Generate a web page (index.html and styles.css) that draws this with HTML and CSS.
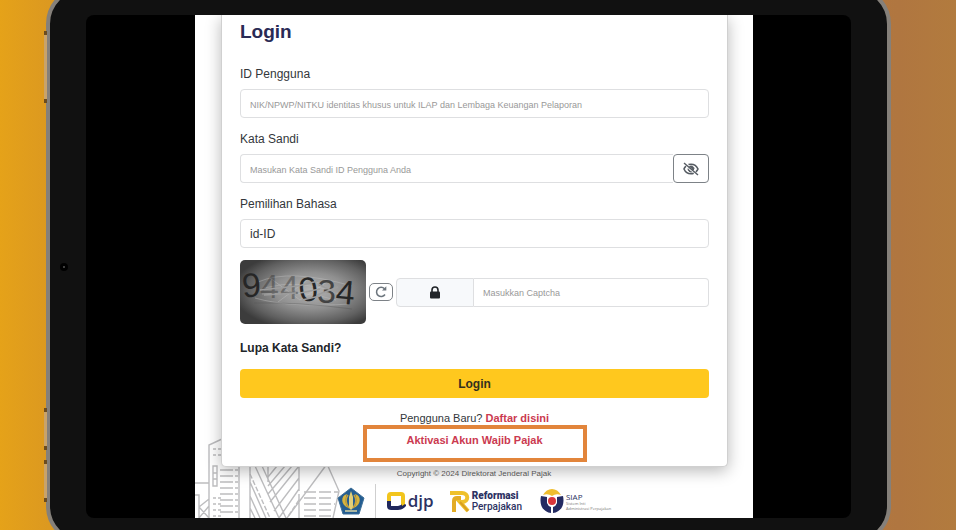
FILE: index.html
```
<!DOCTYPE html>
<html lang="id">
  <head>
    <meta charset="UTF-8" />
    <meta name="viewport" content="width=device-width, initial-scale=1.0" />
    <title>Login - DJP</title>
    <link rel="stylesheet" href="styles.css">
  </head>
  <body>
    <div class="tablet">
      <span class="side-button power"></span>
      <span class="side-button volume-up"></span>
      <span class="side-button volume-down"></span>
      <span class="camera"></span>

      <div class="screen">
        <main class="page">
          <!-- City skyline behind the card -->
          <svg class="skyline" viewBox="0 0 150 82" fill="none" stroke="#bdbdbf" stroke-width="1.4">
            <path d="M14 82V9L27 3M0 47H14M44 30V82M0 59H4V82M4 71L14 63M4 71L14 82M4 82L14 70" />
            <path d="M18 13H26M18 19H26M18 62H26M18 68H26M18 74H26M18 80H26" stroke-dasharray="3 2" />
            <path d="M18 30H22V50H18ZM18 37H22M18 43H22" />
            <path d="M25 34H43M25 40H43M25 46H43M25 52H43M25 58H43M25 64H43M25 70H43M25 76H43" stroke-dasharray="13 2" />
            <path d="M55 30V82M60 30L84 82M67 30L91 82M73 30V46M104 30V55M104 30L75 66M97 30L73 58M90 30L73 50M82 30L73 41M104 42L79 75M104 53L84 82M55 46L71 82M55 60L65 82M55 72L60 82M92 82L132 28L144 55L138 82M104 58V82" />
            <path d="M55 38L75 82M104 64L92 82" stroke-dasharray="5 2" />
            <path d="M109 56H143M109 62H138M109 68H140M109 74H138M109 80H136" stroke-dasharray="12 3" />
          </svg>

          <form class="card">
            <h1>Login</h1>

            <div class="field">
              <label for="user">ID Pengguna</label>
              <input id="user" class="control" type="text" placeholder="NIK/NPWP/NITKU identitas khusus untuk ILAP dan Lembaga Keuangan Pelaporan" />
            </div>

            <div class="field">
              <label for="password">Kata Sandi</label>
              <div class="input-group">
                <input id="password" class="control joined-right" type="password" placeholder="Masukan Kata Sandi ID Pengguna Anda" />
                <button type="button" class="toggle" aria-label="Tampilkan kata sandi">
                  <svg width="16" height="14" viewBox="0 0 16 14" fill="none" stroke="#555b62">
                    <path d="M3 4.200C2 5 1.300 6 1 7c1.300 3 4 4.800 7 4.800 1 0 1.900-.2 2.700-.5M5.500 2.600C6.300 2.300 7.100 2.200 8 2.200c3 0 5.700 1.800 7 4.800-.5 1.100-1.200 2-2.100 2.800" stroke-width="1.600" />
                    <path d="M6.500 4.500C8.500 3.300 11 4.500 11 7L9.800 8.300C9.700 6.500 8.300 6 6.500 4.500ZM5 6.600C5 9 6.500 10.200 8.800 10" fill="#555b62" />
                    <path d="M1 1L15 13" stroke-width="1.400" />
                  </svg>
                </button>
              </div>
            </div>

            <div class="field">
              <label for="language">Pemilihan Bahasa</label>
              <select id="language" class="control">
                <option>id-ID</option>
              </select>
            </div>

            <div class="captcha">
              <svg class="captcha-image" viewBox="0 0 126 64" role="img" aria-label="Captcha">
                <defs>
                  <radialGradient id="glow" cx="0.56" cy="0.48" r="0.62">
                    <stop offset="0" stop-color="#b4b4b4" />
                    <stop offset="0.45" stop-color="#909090" />
                    <stop offset="0.8" stop-color="#606060" />
                    <stop offset="1" stop-color="#3c3c3c" />
                  </radialGradient>
                </defs>
                <rect width="126" height="64" fill="url(#glow)" />
                <g fill="none" stroke="#c4c4c4" stroke-opacity="0.4">
                  <path d="M18 22Q50 8 112 26M15 38Q50 48 110 44M24 28Q60 18 100 34M22 34Q64 30 96 40M30 18L60 40L90 20M38 42L70 18L104 38" />
                </g>
                <path d="M14 43Q60 42 112 49" fill="none" stroke="#555" stroke-opacity="0.4" />
                <g class="digits">
                  <text x="2" y="37" transform="rotate(-4 11 26)">9</text>
                  <text class="faint" x="20" y="38">4</text>
                  <text class="faint" x="40" y="39">4</text>
                  <text x="59" y="41" transform="rotate(-8 68 30)">0</text>
                  <text class="worn" x="77" y="43">3</text>
                  <text x="96" y="44" transform="rotate(5 105 33)">4</text>
                </g>
                <path d="M58 26L78 21M60 33L80 29M62 40L80 36M78 24L97 33M77 35L98 27M20 30L58 26M24 35L56 33" fill="none" stroke="#9c9c9c" stroke-width="1.500" />
              </svg>
              <button type="button" class="refresh" aria-label="Muat ulang captcha">
                <svg width="14" height="14" viewBox="0 0 14 14" fill="none" stroke="#6c757d" stroke-width="1.500">
                  <path d="M11 9.500A4.600 4.600 0 1 1 10.500 3.800" />
                  <path d="M12.300 1.200V5.600H8Z" fill="#6c757d" stroke="none" />
                </svg>
              </button>
              <div class="input-group">
                <label class="addon" for="captcha" aria-label="Captcha">
                  <svg width="12" height="13" viewBox="0 0 12 13">
                    <path d="M3 6V4a3 3 0 0 1 6 0v2" fill="none" stroke="#212529" stroke-width="1.600" />
                    <rect x="1" y="5.500" width="10" height="7" rx="1" fill="#212529" />
                  </svg>
                </label>
                <input id="captcha" class="control joined-left" type="text" placeholder="Masukkan Captcha" />
              </div>
            </div>

            <a class="forgot" href="#">Lupa Kata Sandi?</a>
            <button type="submit" class="submit">Login</button>

            <p class="register">Pengguna Baru? <a href="#">Daftar disini</a></p>
            <a class="activation" href="#">Aktivasi Akun Wajib Pajak</a>
          </form>

          <footer>
            <p class="copyright">Copyright © 2024 Direktorat Jenderal Pajak</p>
            <div class="logos">
              <svg width="28" height="28" viewBox="0 0 28 28">
                <path d="M14 1L27 11L22 27H6L1 11Z" fill="#245d91" stroke="#3d6f98" />
                <path d="M14 4L12 10V21L14 23L16 21V10Z" fill="#e2cf79" />
                <path d="M10 7C3 9 4 18 11 21C8 16 8 12 10 7ZM18 7C25 9 24 18 17 21C20 16 20 12 18 7Z" fill="#d8b43c" />
                <path d="M11 8C8 12 9 17 12 21M17 8C20 12 19 17 16 21" fill="none" stroke="#c7a13b" stroke-width="1.500" />
                <path d="M8 24H20" stroke="#d9d6a8" stroke-width="1.500" />
              </svg>
              <span class="divider"></span>
              <div class="logo djp">
                <svg width="20" height="20" viewBox="0 0 20 20" fill="none" stroke-width="4">
                  <path d="M3 11V5Q3 3 5 3H15Q17 3 17 5V14" stroke="#f2c51d" />
                  <path d="M3 10V15Q3 17 5 17H12Q16 17 19 13" stroke="#20285c" />
                  <path d="M15 8H19V13L16 15Z" fill="#f2c51d" />
                </svg>
                <span>djp</span>
              </div>
              <div class="logo reform">
                <svg width="21" height="23" viewBox="0 0 21 23" fill="none" stroke-width="4">
                  <path d="M1 3H13C20 3 20 12 13 12H11L19 21" stroke="#efc12b" />
                  <path d="M5 22V11Q5 8 8 8H12" stroke="#e3ac25" />
                  <path d="M11 12L19 21" stroke="#d99f20" stroke-width="2" />
                </svg>
                <div class="reform-name">
                  <strong>Reformasi</strong>
                  <span>Perpajakan</span>
                </div>
              </div>
              <div class="logo siap">
                <svg width="24" height="26" viewBox="0 0 24 26">
                  <path d="M3 7C7-1 17-1 21 7Q16 5 12 8Q8 5 3 7Z" fill="#efbd2e" />
                  <path d="M1 8L7 9V15Q8 18 11 19V25C3 24-1 17 1 8ZM23 8L17 9V15Q16 18 13 19V25C21 24 25 17 23 8Z" fill="#242b62" />
                  <circle cx="12" cy="13" r="4" fill="#d9363b" />
                </svg>
                <div>
                  <span class="siap-name">SIAP</span>
                  <span class="siap-sub">Sistem Inti<br>Administrasi Perpajakan</span>
                </div>
              </div>
            </div>
          </footer>
        </main>
      </div>
    </div>
  </body>
</html>
```
FILE: styles.css
```
* {
  box-sizing: border-box;
}

body {
  margin: 0;
  height: 100vh;
  display: flex;
  overflow: hidden;
  font-family: "Liberation Sans", Arial, sans-serif;
  font-size: 12px;
  color: #33373b;
  background: linear-gradient(90deg, #e5a219 0%, #dc9920 5%, #b07640 94%, #b27b3e 100%);
}

h1,
p {
  margin: 0;
}

a {
  text-decoration: none;
}

svg {
  display: block;
  flex: none;
}

/* Tablet frame */
.tablet {
  position: relative;
  flex: 1;
  display: flex;
  margin: -14px 65px -14px 46px;
  padding: 25px 36px 22px;
  border: 4px solid #85807a;
  border-radius: 38px;
  background: #111;
}

.side-button {
  position: absolute;
  left: -6px;
  width: 3px;
  border: solid #6b4c20;
  border-width: 4px 0;
  background: #c9a36a;
}

.power {
  top: 41px;
  height: 72px;
}

.volume-up {
  top: 418px;
  height: 42px;
}

.volume-down {
  top: 470px;
  height: 42px;
}

.camera {
  position: absolute;
  left: 10px;
  top: 273px;
  width: 8px;
  height: 8px;
  border: 3px solid #000;
  border-radius: 50%;
  background: #555;
}

.screen {
  flex: 1;
  display: flex;
  padding: 0 98px 0 109px;
  border-radius: 8px;
  background: #000;
}

.page {
  position: relative;
  flex: 1;
  display: flex;
  flex-direction: column;
  overflow: hidden;
  background: #fff;
}

.skyline {
  position: absolute;
  left: 0;
  bottom: 0;
  width: 150px;
  height: 82px;
}

/* Login card */
.card {
  position: relative;
  display: flex;
  flex-direction: column;
  margin: 0 25px 0 26px;
  padding: 5px 18px 4px;
  border: 1px solid #d0d0d0;
  border-top: 0;
  border-radius: 0 0 5px 5px;
  background: #fff;
  box-shadow: 0 4px 16px rgba(0, 0, 0, 0.28);
}

h1 {
  margin-bottom: 21px;
  font-size: 19px;
  line-height: 24px;
  color: #2a2b55;
}

.field {
  display: flex;
  flex-direction: column;
  gap: 6px;
  margin-bottom: 12px;
  line-height: 18px;
}

.control {
  width: 100%;
  min-width: 0;
  height: 29px;
  padding: 0 9px;
  border: 1px solid #dedfe1;
  border-radius: 4px;
  font-family: inherit;
  font-size: 12px;
  color: #33373b;
  background: #fff;
  appearance: none;
}

.control::placeholder {
  font-size: 9px;
  color: #999;
  opacity: 1;
}

.input-group {
  flex: 1;
  display: flex;
}

.joined-right {
  border-right: 0;
  border-radius: 4px 0 0 4px;
}

.joined-left {
  border-left: 0;
  border-radius: 0 4px 4px 0;
}

.toggle,
.refresh {
  display: flex;
  align-items: center;
  justify-content: center;
  padding: 0;
  border: 1px solid #7d8287;
  border-radius: 4px;
  background: #fff;
}

.toggle {
  flex: none;
  width: 36px;
}

/* Captcha row */
.captcha {
  display: flex;
  align-items: center;
  gap: 3px;
  margin-bottom: 15px;
}

.captcha-image {
  width: 126px;
  height: 64px;
  border-radius: 5px;
}

.digits {
  font-family: "Liberation Sans", Arial, sans-serif;
  font-size: 34px;
  fill: #262626;
}

.faint {
  fill: #333;
  fill-opacity: 0.45;
}

.worn {
  fill-opacity: 0.75;
}

.refresh {
  width: 24px;
  height: 18px;
  border-radius: 5px;
}

.addon {
  display: flex;
  flex: none;
  align-items: center;
  justify-content: center;
  width: 78px;
  border: 1px solid #dedfe1;
  border-radius: 4px 0 0 4px;
  background: #f7f9fb;
}

.forgot {
  align-self: flex-start;
  margin-bottom: 12px;
  font-weight: bold;
  line-height: 18px;
  color: #212529;
}

.submit {
  height: 29px;
  margin-bottom: 13px;
  border: 0;
  border-radius: 4px;
  font-family: inherit;
  font-size: 12px;
  font-weight: bold;
  color: #33301f;
  background: #ffc81e;
}

.register {
  font-size: 11px;
  line-height: 14px;
  text-align: center;
}

.register a,
.activation {
  font-weight: bold;
  color: #cb3a50;
}

.activation {
  align-self: center;
  width: 224px;
  padding: 4px 0 11px;
  border: 4px solid #e2853b;
  font-size: 11px;
  line-height: 14px;
  text-align: center;
}

/* Footer */
footer {
  position: relative;
}

.copyright {
  font-size: 8px;
  line-height: 14px;
  text-align: center;
  color: #555;
}

.logos {
  display: flex;
  align-items: center;
  justify-content: center;
  gap: 10px;
  height: 40px;
}

.divider {
  width: 1px;
  height: 34px;
  background: #cfcfcf;
}

.logo {
  display: flex;
  align-items: center;
  gap: 2px;
  color: #2c3263;
}

.djp {
  margin-right: 5px;
  font-family: "Open Sans", sans-serif;
  font-size: 17px;
  font-weight: 600;
  line-height: 20px;
}

.reform {
  margin-right: 8px;
}

.reform-name {
  display: flex;
  flex-direction: column;
  font-family: Roboto, sans-serif;
  font-size: 10px;
  font-weight: 500;
  line-height: 11px;
}

.reform-name strong {
  font-weight: 900;
}

.siap-name,
.siap-sub {
  display: block;
  font-family: "Open Sans", sans-serif;
}

.siap-name {
  font-size: 8px;
  line-height: 9px;
}

.siap-sub {
  font-size: 4px;
  line-height: 5px;
  color: #777;
}
```
